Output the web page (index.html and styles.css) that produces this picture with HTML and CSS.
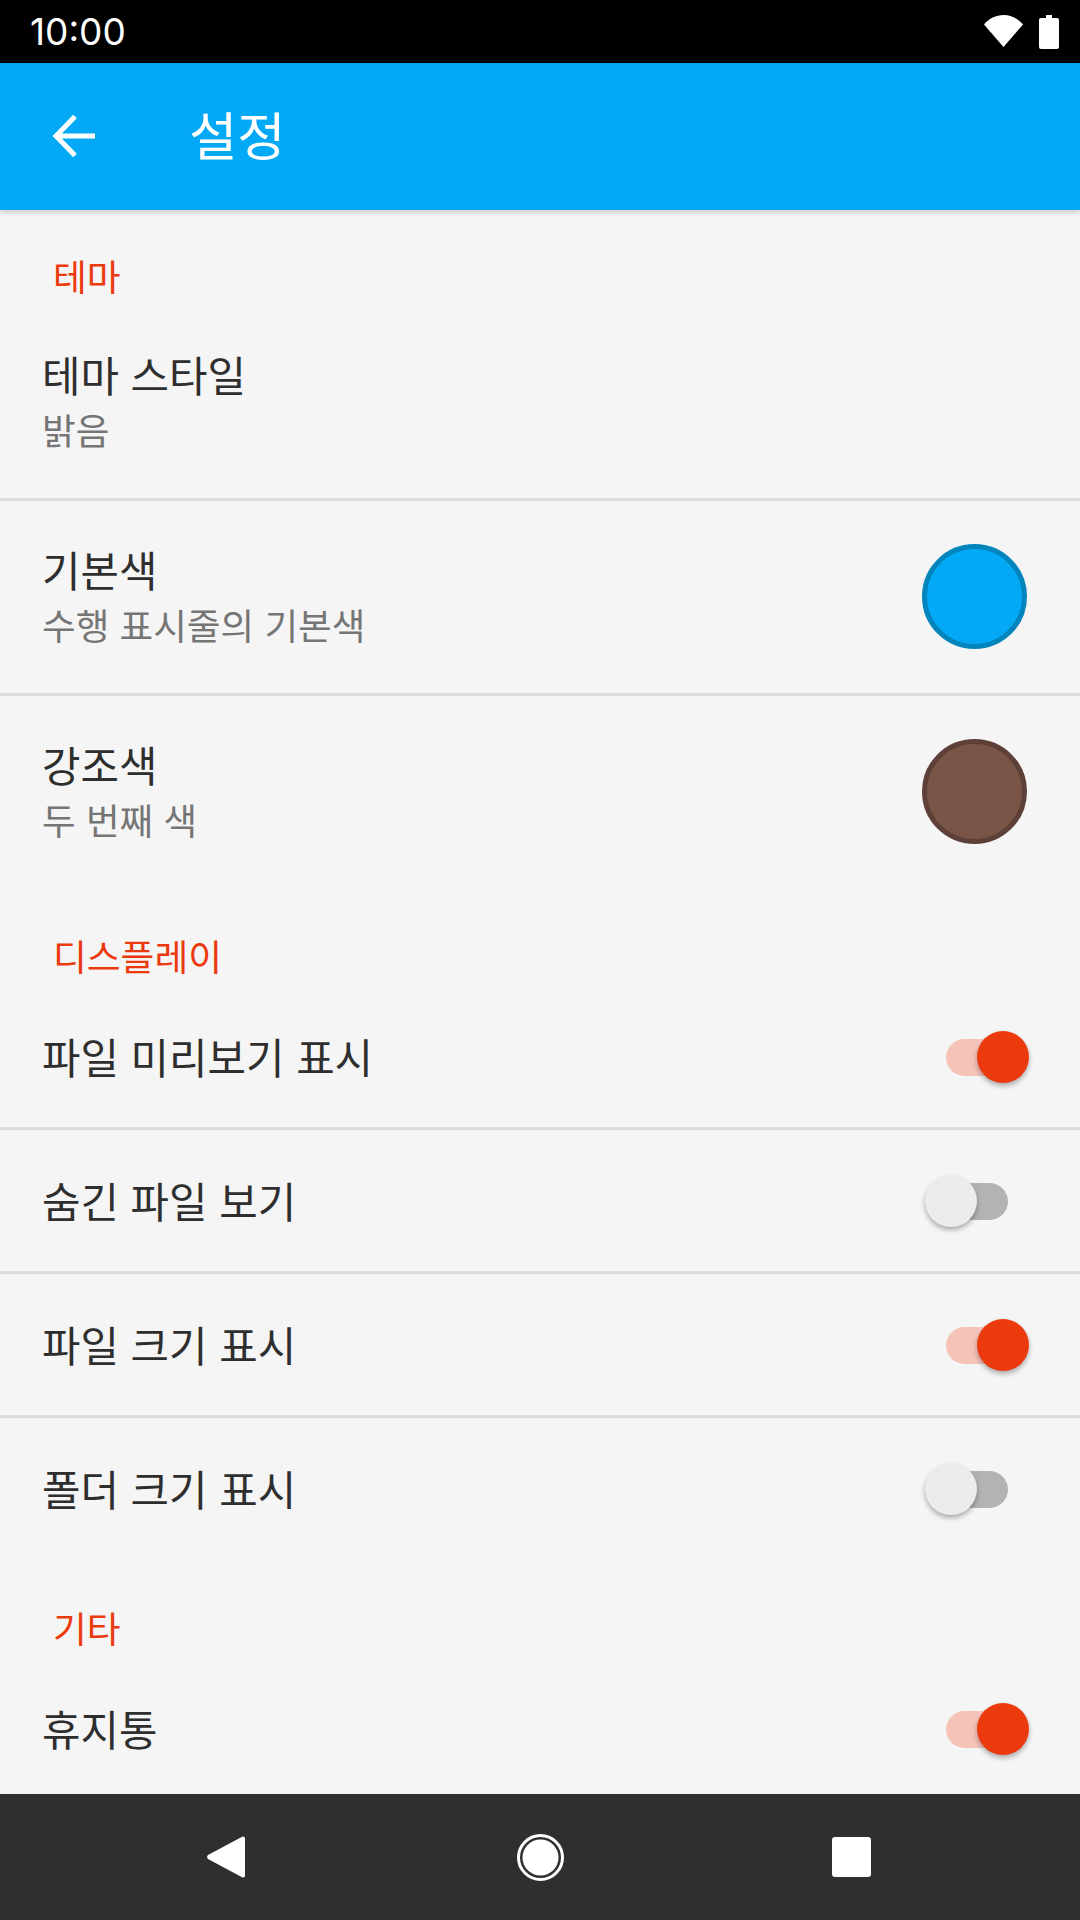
FILE: index.html

```html
<!DOCTYPE html>
<html lang="ko">

<head>
    <title>설정</title>
    <link rel="stylesheet" href="styles.css">
</head>

<body>
    <div class="status-bar">
        <span class="clock">10:00</span>
        <div class="status-icons">
            <svg class="wifi-icon" width="39" height="32" viewBox="0 0 39 32">
                <path d="M0 9.5C5 3.5 12 0 19.5 0S34 3.500 39 9.500L19.500 32Z" fill="#fff" />
            </svg>
            <svg class="battery-icon" width="20" height="34" viewBox="0 0 20 34">
                <path d="M7 0h6v3h5a2 2 0 0 1 2 2v27a2 2 0 0 1-2 2H2a2 2 0 0 1-2-2V5a2 2 0 0 1 2-2h5Z" fill="#fff" />
            </svg>
        </div>
    </div>

    <header class="app-bar">
        <svg class="back-arrow" width="63" height="63" viewBox="0 0 63 63">
            <path d="M53 31H14M33 11.500L14 31l19 19.500" fill="none" stroke="#fff" stroke-width="5" />
        </svg>
        <h1 class="app-title">설정</h1>
    </header>

    <main class="settings">
        <h2 class="section-title">테마</h2>
        <div class="row row-tall">
            <div class="row-text">
                <div class="row-title">테마 스타일</div>
                <div class="row-summary">밝음</div>
            </div>
        </div>
        <hr class="divider">
        <div class="row row-tall">
            <div class="row-text">
                <div class="row-title">기본색</div>
                <div class="row-summary">수행 표시줄의 기본색</div>
            </div>
            <div class="swatch swatch-blue"></div>
        </div>
        <hr class="divider">
        <div class="row row-tall">
            <div class="row-text">
                <div class="row-title">강조색</div>
                <div class="row-summary">두 번째 색</div>
            </div>
            <div class="swatch swatch-brown"></div>
        </div>

        <h2 class="section-title">디스플레이</h2>
        <div class="row">
            <div class="row-title">파일 미리보기 표시</div>
            <div class="switch on"><span class="track"></span><span class="thumb"></span></div>
        </div>
        <hr class="divider">
        <div class="row">
            <div class="row-title">숨긴 파일 보기</div>
            <div class="switch"><span class="track"></span><span class="thumb"></span></div>
        </div>
        <hr class="divider">
        <div class="row">
            <div class="row-title">파일 크기 표시</div>
            <div class="switch on"><span class="track"></span><span class="thumb"></span></div>
        </div>
        <hr class="divider">
        <div class="row">
            <div class="row-title">폴더 크기 표시</div>
            <div class="switch"><span class="track"></span><span class="thumb"></span></div>
        </div>

        <h2 class="section-title section-title-tall">기타</h2>
        <div class="row">
            <div class="row-title">휴지통</div>
            <div class="switch on"><span class="track"></span><span class="thumb"></span></div>
        </div>
    </main>

    <nav class="nav-bar">
        <svg class="nav-back" width="38" height="42" viewBox="0 0 38 42">
            <path d="M36 0.500a2 2 0 0 1 2 2v37a2 2 0 0 1-2 2q-.7 0-1.300-.5L1 23a2.600 2.600 0 0 1 0-4L34.700 1q.6-.5 1.300-.5Z" fill="#fff" />
        </svg>
        <svg class="nav-home" width="47" height="47" viewBox="0 0 47 47">
            <circle cx="23.500" cy="23.500" r="22" fill="none" stroke="#fff" stroke-width="3" />
            <circle cx="23.500" cy="23.500" r="18" fill="#fff" />
        </svg>
        <div class="nav-square"></div>
    </nav>
</body>

</html>
```

FILE: styles.css

```css
* {
    box-sizing: border-box;
}

body {
    font-family: "Noto Sans CJK KR", "Noto Sans", sans-serif;
    background-color: #f5f5f5;
    margin: 0;
    height: 1920px;
    display: flex;
    flex-direction: column;
    overflow: hidden;
}

.status-bar {
    height: 63px;
    background-color: #000;
    color: #fff;
    display: flex;
    align-items: center;
    justify-content: space-between;
    padding: 0 21px 0 30px;
    flex-shrink: 0;
}

.clock {
    font-family: Inter, Roboto, sans-serif;
    font-size: 37px;
    line-height: 63px;
}

.status-icons {
    display: flex;
    align-items: flex-start;
    gap: 16px;
    height: 34px;
}

.app-bar {
    height: 147px;
    background-color: #03a9f4;
    display: flex;
    align-items: center;
    padding-left: 42px;
    flex-shrink: 0;
    position: relative;
    box-shadow: 0 2px 6px rgba(0, 0, 0, 0.2);
}

.app-title {
    margin: 0 0 7px 84px;
    color: #fff;
    font-size: 52.5px;
    font-weight: 400;
    line-height: 60px;
}

.settings {
    flex: 1;
    min-height: 0;
    overflow: hidden;
}

.section-title {
    margin: 0;
    height: 95px;
    padding: 45px 0 0 53px;
    color: #ec3a0f;
    font-size: 36.75px;
    font-weight: 400;
    line-height: 40px;
}

.section-title-tall {
    height: 96px;
    padding-top: 46px;
}

.row {
    height: 144px;
    display: flex;
    align-items: center;
    justify-content: space-between;
    padding-left: 42px;
}

.row-tall {
    height: 195px;
}

.row-text {
    padding-bottom: 2px;
}

.row-title {
    color: #2e2e2e;
    font-size: 41.8px;
    line-height: 56px;
}

.row > .row-title {
    margin-bottom: 3px;
}

.row-summary {
    color: #757575;
    font-size: 36.6px;
    line-height: 55px;
}

.divider {
    margin: -2px 0 -1px;
    height: 3px;
    border: none;
    background-color: #dcdcdc;
}

.swatch {
    width: 105px;
    height: 105px;
    margin: 0 53px 2px 0;
    border-radius: 50%;
    border: 5px solid;
}

.swatch-blue {
    background-color: #03a9f4;
    border-color: #0284bc;
}

.swatch-brown {
    background-color: #795548;
    border-color: #5d4037;
}

.switch {
    width: 104px;
    height: 52px;
    margin-right: 51px;
    position: relative;
}

.track {
    position: absolute;
    left: 21px;
    top: 8px;
    width: 62px;
    height: 37px;
    border-radius: 19px;
    background-color: #b3b3b3;
}

.thumb {
    position: absolute;
    left: 0;
    top: 0;
    width: 52px;
    height: 52px;
    border-radius: 50%;
    background-color: #ececec;
    box-shadow: 0 3px 5px rgba(0, 0, 0, 0.3);
}

.switch.on .track {
    background-color: #f6c3b8;
}

.switch.on .thumb {
    left: 52px;
    background-color: #ec3a0f;
}

.nav-bar {
    height: 126px;
    background-color: #2f2f2f;
    flex-shrink: 0;
    display: grid;
    grid-template-columns: 310px 315px 39px;
    align-items: center;
    padding-left: 207px;
}

.nav-square {
    width: 39px;
    height: 40px;
    border-radius: 3px;
    background-color: #fff;
}
```
